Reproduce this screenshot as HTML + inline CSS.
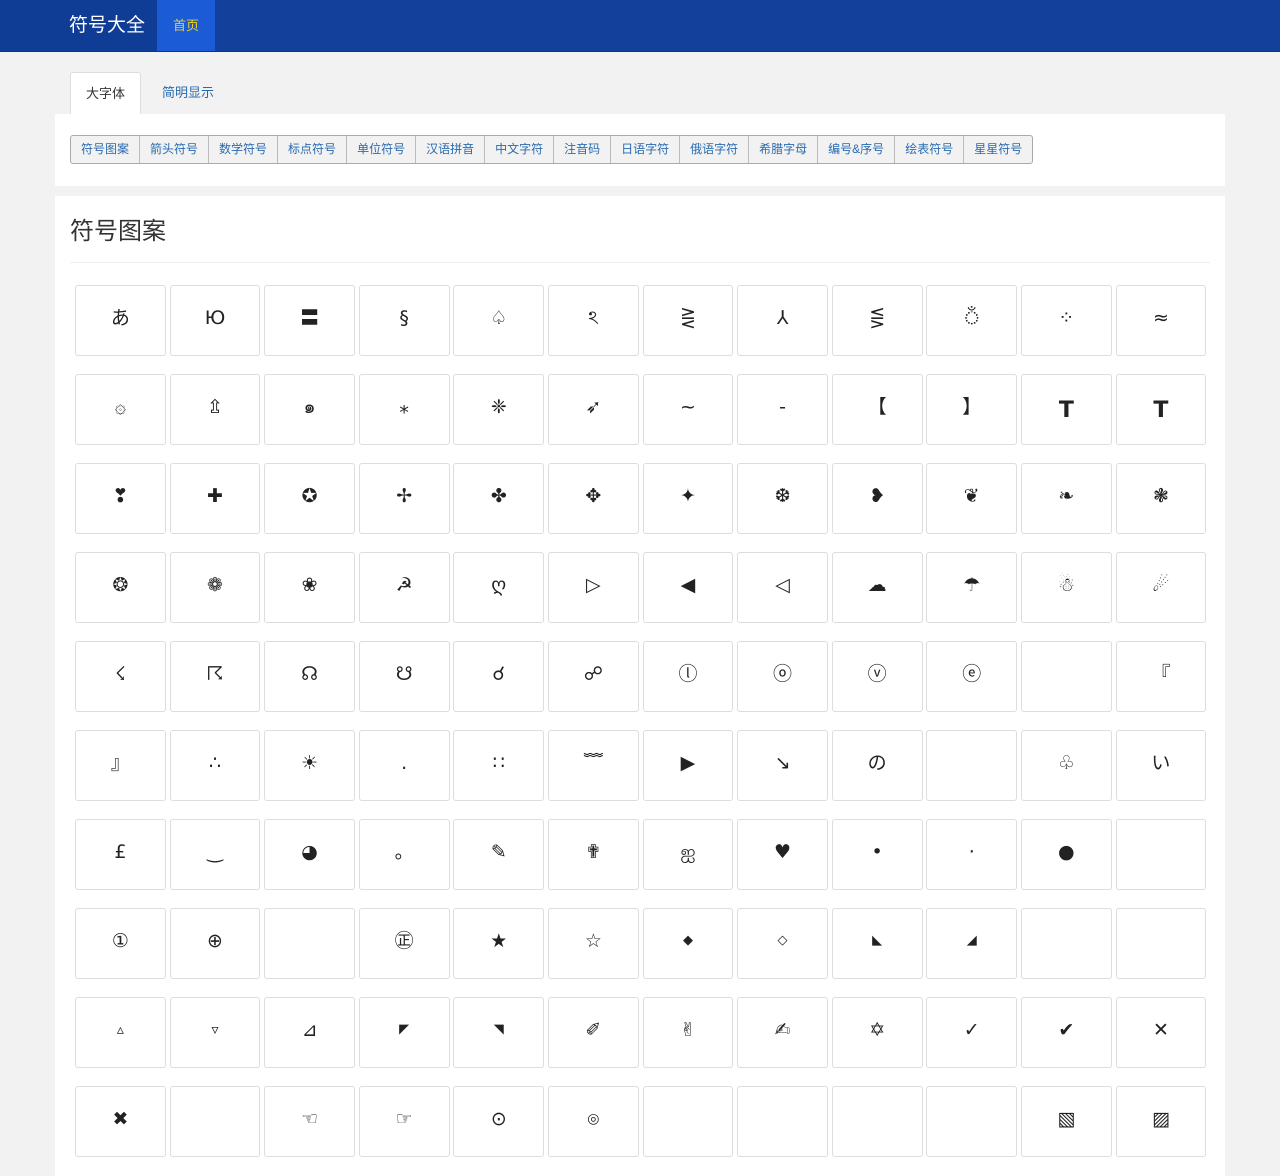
<!DOCTYPE html>
<html><head><meta charset="utf-8"><style>
*{box-sizing:border-box;margin:0;padding:0}
body{width:1280px;height:1167px;overflow:hidden;background:#f2f2f2;font-family:"Liberation Sans","Noto Sans CJK SC",sans-serif;color:#333}
.nav{height:52px;background:#12409b;border-bottom:1px solid #0d3688;position:relative}
.brand{position:absolute;left:0;top:0;width:157px;height:51px;background:#0f3c94;color:#fff;font-size:19px;line-height:51px;padding-left:69px}
.home{position:absolute;left:157px;top:0;width:58px;height:51px;background:#1c5bd6;color:#f0d020;font-size:13px;line-height:51px;text-align:center}
.tabs{position:absolute;left:70px;top:72px;height:42px}
.tab{float:left;height:42px;line-height:42px;padding:0 15px;font-size:13px;color:#2a6bb0;margin-right:6px}
.tab.a{background:#fff;border:1px solid #ddd;border-bottom:none;border-radius:3px 3px 0 0;color:#333}
.p1{position:absolute;left:55px;top:114px;width:1170px;height:72px;background:#fff}
.btns{position:absolute;left:15px;top:21px;display:flex;border:1px solid #aaa;border-radius:3px;background:#f2f2f2;height:29px}
.btns span{font-size:12px;color:#2a6bb0;line-height:27px;padding:0 10px;border-right:1px solid #bbb}
.btns span:last-child{border-right:none}
.p2{position:absolute;left:55px;top:196px;width:1170px;height:980px;background:#fff}
h2{position:absolute;left:15px;top:15px;font-size:24px;font-weight:normal;color:#333}
.hr{position:absolute;left:15px;right:15px;top:66px;border-top:1px solid #eee}
.grid{position:absolute;left:20px;top:89px;display:grid;grid-template-columns:repeat(12,90.8px);column-gap:3.8px;row-gap:18px}
.grid div{height:71px;border:1px solid #ddd;border-radius:3px;text-align:center;line-height:64px;font-size:19px;color:#222;font-family:"DejaVu Sans","Noto Sans CJK SC",sans-serif}
.grid div.b{font-weight:bold;font-size:22px;line-height:72px}
</style></head><body>
<div class="nav"><div class="brand">符号大全</div><div class="home">首页</div></div>
<div class="tabs"><div class="tab a">大字体</div><div class="tab">简明显示</div></div>
<div class="p1"><div class="btns"><span>符号图案</span><span>箭头符号</span><span>数学符号</span><span>标点符号</span><span>单位符号</span><span>汉语拼音</span><span>中文字符</span><span>注音码</span><span>日语字符</span><span>俄语字符</span><span>希腊字母</span><span>编号&amp;序号</span><span>绘表符号</span><span>星星符号</span></div></div>
<div class="p2"><h2>符号图案</h2><div class="hr"></div>
<div class="grid">
<div>あ</div><div>Ю</div><div>〓</div><div>§</div><div>♤</div><div>ঽ</div><div>⋛</div><div>⅄</div><div>⋚</div><div>ঁ</div><div>⁘</div><div>≈</div>
<div>۞</div><div>⇫</div><div>๑</div><div>⁎</div><div>❈</div><div>➶</div><div>~</div><div>-</div><div>【</div><div>】</div><div class="b">T</div><div class="b">T</div>
<div>❣</div><div>✚</div><div>✪</div><div>✢</div><div>✤</div><div>✥</div><div>✦</div><div>❆</div><div>❥</div><div>❦</div><div>❧</div><div>❃</div>
<div>❂</div><div>❁</div><div>❀</div><div>☭</div><div>ღ</div><div>▷</div><div>◀</div><div>◁</div><div>☁</div><div>☂</div><div>☃</div><div>☄</div>
<div>☇</div><div>☈</div><div>☊</div><div>☋</div><div>☌</div><div>☍</div><div>ⓛ</div><div>ⓞ</div><div>ⓥ</div><div>ⓔ</div><div></div><div>『</div>
<div>』</div><div>∴</div><div>☀</div><div>.</div><div>∷</div><div>﹌</div><div>▶</div><div>↘</div><div>の</div><div></div><div>♧</div><div>い</div>
<div>£</div><div>‿</div><div>◕</div><div>。</div><div>✎</div><div>✟</div><div>ஐ</div><div>♥</div><div>•</div><div>‧</div><div>●</div><div></div>
<div>①</div><div>⊕</div><div></div><div>㊣</div><div>★</div><div>☆</div><div style="font-size:13px">◆</div><div style="font-size:13px">◇</div><div style="font-size:13px">◣</div><div style="font-size:13px">◢</div><div></div><div></div>
<div style="font-size:14px">▵</div><div style="font-size:14px">▿</div><div>⊿</div><div style="font-size:13px">◤</div><div style="font-size:13px">◥</div><div>✐</div><div>✌</div><div>✍</div><div>✡</div><div>✓</div><div>✔</div><div>✕</div>
<div>✖</div><div></div><div>☜</div><div>☞</div><div>⊙</div><div style="font-size:14px">◎</div><div></div><div></div><div></div><div></div><div>▧</div><div>▨</div>
</div></div>
</body></html>
